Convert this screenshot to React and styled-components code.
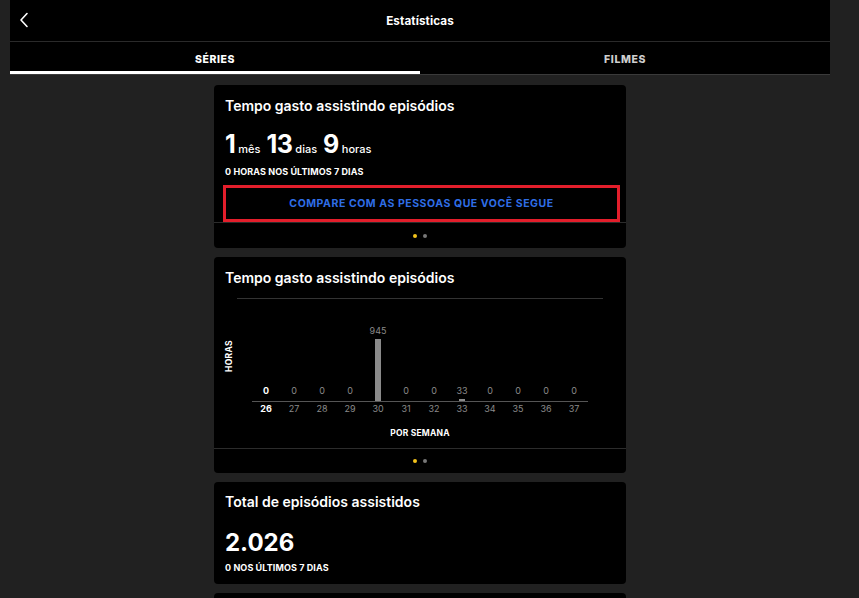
import React from "react";
import styled, { createGlobalStyle } from "styled-components";

const Global = createGlobalStyle`
  html, body { margin: 0; padding: 0; background: #212121; }
  body { font-family: Inter, "Noto Sans", sans-serif; color: #fff; overflow: hidden; }
  * { box-sizing: border-box; }
`;

const Page = styled.div`
  width: 820px;
  margin-left: 10px;
  height: 598px;
  overflow: hidden;
`;

const Header = styled.header`
  height: 42px;
  background: #000;
  border-bottom: 1px solid #2a2a2a;
  display: flex;
  align-items: center;
  justify-content: center;
  position: relative;
`;

const Back = styled.button`
  position: absolute;
  left: 4px;
  top: 10px;
  width: 20px;
  height: 20px;
  padding: 0;
  background: none;
  border: 0;
  color: #fff;
  display: flex;
  align-items: center;
  justify-content: center;
`;

const Title = styled.h1`
  margin: 0;
  font-size: 11.7px;
  font-weight: 700;
  letter-spacing: 0.1px;
  padding-top: 1px;
`;

const Tabs = styled.nav`
  display: grid;
  grid-template-columns: 1fr 1fr;
  background: #000;
  height: 33px;
  border-bottom: 1px solid #3a3a3a;
`;

const Tab = styled.div`
  display: flex;
  align-items: center;
  justify-content: center;
  font-size: 10.5px;
  font-weight: 800;
  letter-spacing: 0.6px;
  color: ${(p) => (p.$active ? "#fff" : "#cfcfcf")};
  border-bottom: 3px solid ${(p) => (p.$active ? "#fff" : "transparent")};
  padding-top: 5px;
`;

const Feed = styled.main`
  display: flex;
  flex-direction: column;
  align-items: center;
  gap: 9px;
  padding-top: 10px;
`;

const Card = styled.section`
  width: 412px;
  background: #000;
  border-radius: 4px;
  overflow: hidden;
`;

const Body = styled.div`
  padding: ${(p) => p.$pt || 11}px 11px ${(p) => p.$pb || 0}px 11px;
`;

const CardTitle = styled.h2`
  margin: 0;
  font-size: 14px;
  font-weight: 600;
  line-height: 20px;
`;

const Stats = styled.div`
  display: flex;
  align-items: baseline;
  margin-top: 13px;
  line-height: 30px;
`;

const Num = styled.span`
  font-size: 25px;
  font-weight: 700;
  letter-spacing: -0.5px;
`;

const Unit = styled.span`
  font-size: 11px;
  font-weight: 500;
  margin: 0 6px 0 3px;
`;

const Big = styled.div`
  font-size: 24px;
  font-weight: 700;
  margin-top: 16px;
  line-height: 30px;
`;

const Caption = styled.div`
  font-size: 9px;
  font-weight: 700;
  letter-spacing: 0.1px;
  margin-top: ${(p) => p.$mt}px;
`;

const Compare = styled.button`
  display: flex;
  align-items: center;
  justify-content: center;
  width: 397px;
  height: 37px;
  margin: 8px 0 0 -2px;
  background: #000;
  border: 3px solid #e31e2b;
  color: #2f6ee6;
  font-family: inherit;
  font-size: 10.5px;
  font-weight: 700;
  letter-spacing: 0.55px;
`;

const Footer = styled.div`
  border-top: 1px solid #2c2c2c;
  height: ${(p) => p.$h || 25}px;
  display: flex;
  align-items: center;
  justify-content: center;
  gap: 6px;
`;

const Dot = styled.span`
  width: 4px;
  height: 4px;
  border-radius: 50%;
  background: ${(p) => (p.$on ? "#f2c21b" : "#777")};
`;

const Divider = styled.div`
  height: 1px;
  background: #333;
  margin: 10px 23px 0 23px;
`;

const ChartArea = styled.div`
  display: flex;
  align-items: flex-end;
  height: 116px;
`;

const AxisLabel = styled.div`
  width: 29px;
  height: 100px;
  display: flex;
  align-items: center;
  justify-content: center;
  align-self: flex-start;
  margin-top: 7px;
`;

const Vertical = styled.span`
  transform: rotate(-90deg);
  font-size: 8.5px;
  font-weight: 700;
  letter-spacing: 0.3px;
  white-space: nowrap;
`;

const Plot = styled.div`
  margin-left: 9px;
  width: 336px;
`;

const Bars = styled.div`
  display: grid;
  grid-template-columns: repeat(12, 28px);
  height: 90px;
  align-items: end;
  border-bottom: 1px solid #555;
`;

const Col = styled.div`
  display: flex;
  flex-direction: column;
  align-items: center;
  justify-content: flex-end;
`;

const Value = styled.span`
  font-size: 9px;
  color: ${(p) => (p.$on ? "#fff" : "#8a8a8a")};
  font-weight: ${(p) => (p.$on ? 700 : 400)};
  line-height: 11px;
  margin-bottom: ${(p) => (p.$bar ? 3 : 5)}px;
`;

const Bar = styled.div`
  width: 6px;
  background: #8a8a8a;
`;

const Weeks = styled.div`
  display: grid;
  grid-template-columns: repeat(12, 28px);
  margin-top: 1px;
`;

const Week = styled.span`
  text-align: center;
  font-size: 9px;
  line-height: 12px;
  color: ${(p) => (p.$on ? "#fff" : "#8a8a8a")};
  font-weight: ${(p) => (p.$on ? 700 : 400)};
`;

const XLabel = styled.div`
  text-align: center;
  font-size: 8.5px;
  font-weight: 700;
  letter-spacing: 0.2px;
  margin-top: 13px;
`;

const Spacer = styled.div`
  height: 10px;
`;

const data = [
  [26, 0], [27, 0], [28, 0], [29, 0], [30, 945], [31, 0],
  [32, 0], [33, 33], [34, 0], [35, 0], [36, 0], [37, 0],
];

function Dots({ h }) {
  return (
    <Footer $h={h}>
      <Dot $on />
      <Dot />
    </Footer>
  );
}

export default function App() {
  return (
    <>
      <Global />
      <Page>
        <Header>
          <Back aria-label="Voltar">
            <svg width="10" height="16" viewBox="0 0 10 16" fill="none">
              <path d="M8 1.5L2 8l6 6.5" stroke="#fff" strokeWidth="1.6" strokeLinecap="round" strokeLinejoin="round" />
            </svg>
          </Back>
          <Title>Estatísticas</Title>
        </Header>
        <Tabs>
          <Tab $active>SÉRIES</Tab>
          <Tab>FILMES</Tab>
        </Tabs>
        <Feed>
          <Card>
            <Body>
              <CardTitle>Tempo gasto assistindo episódios</CardTitle>
              <Stats>
                <Num>1</Num><Unit>mês</Unit>
                <Num>13</Num><Unit>dias</Unit>
                <Num>9</Num><Unit>horas</Unit>
              </Stats>
              <Caption $mt={2}>0 HORAS NOS ÚLTIMOS 7 DIAS</Caption>
              <Compare>COMPARE COM AS PESSOAS QUE VOCÊ SEGUE</Compare>
            </Body>
            <Dots h={26} />
          </Card>
          <Card>
            <Body>
              <CardTitle>Tempo gasto assistindo episódios</CardTitle>
            </Body>
            <Divider />
            <ChartArea>
              <AxisLabel><Vertical>HORAS</Vertical></AxisLabel>
              <Plot>
                <Bars>
                  {data.map(([w, v], i) => (
                    <Col key={w}>
                      <Value $on={i === 0} $bar={v > 0}>{v}</Value>
                      {v > 0 && <Bar style={{ height: `${Math.max(2, (v / 945) * 62)}px` }} />}
                    </Col>
                  ))}
                </Bars>
                <Weeks>
                  {data.map(([w], i) => (
                    <Week key={w} $on={i === 0}>{w}</Week>
                  ))}
                </Weeks>
              </Plot>
            </ChartArea>
            <XLabel>POR SEMANA</XLabel>
            <Spacer />
            <Dots />
          </Card>
          <Card>
            <Body $pt={10} $pb={11}>
              <CardTitle>Total de episódios assistidos</CardTitle>
              <Big>2.026</Big>
              <Caption $mt={4}>0 NOS ÚLTIMOS 7 DIAS</Caption>
            </Body>
          </Card>
          <Card>
            <Body $pb={40} />
          </Card>
        </Feed>
      </Page>
    </>
  );
}
